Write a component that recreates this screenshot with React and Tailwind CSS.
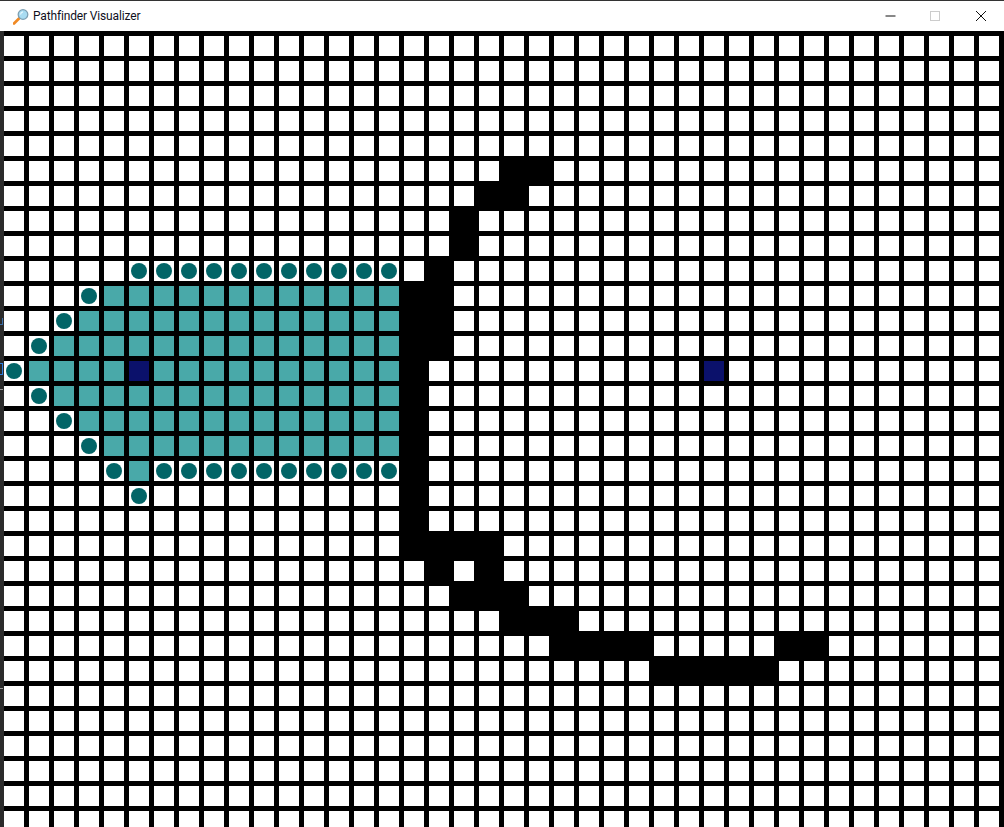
const COLS = 40;
const ROWS = 32;

const span = (row, from, to) => {
  const out = [];
  for (let c = from; c <= to; c++) out.push(`${row}:${c}`);
  return out;
};

const walls = new Set([
  ...span(5, 20, 21),
  ...span(6, 19, 20),
  ...span(7, 18, 18),
  ...span(8, 18, 18),
  ...span(9, 17, 17),
  ...span(10, 16, 17),
  ...span(11, 16, 17),
  ...span(12, 16, 17),
  ...span(13, 16, 16),
  ...span(14, 16, 16),
  ...span(15, 16, 16),
  ...span(16, 16, 16),
  ...span(17, 16, 16),
  ...span(18, 16, 16),
  ...span(19, 16, 16),
  ...span(20, 16, 19),
  ...span(21, 17, 17),
  ...span(21, 19, 19),
  ...span(22, 18, 20),
  ...span(23, 20, 22),
  ...span(24, 22, 25),
  ...span(24, 31, 32),
  ...span(25, 26, 30),
]);

const visited = new Set([
  ...span(10, 4, 15),
  ...span(11, 3, 15),
  ...span(12, 2, 15),
  ...span(13, 1, 15),
  ...span(14, 2, 15),
  ...span(15, 3, 15),
  ...span(16, 4, 15),
  ...span(17, 5, 5),
]);

const frontier = new Set([
  ...span(9, 5, 15),
  ...span(10, 3, 3),
  ...span(11, 2, 2),
  ...span(12, 1, 1),
  ...span(13, 0, 0),
  ...span(14, 1, 1),
  ...span(15, 2, 2),
  ...span(16, 3, 3),
  ...span(17, 4, 4),
  ...span(17, 6, 15),
  ...span(18, 5, 5),
]);

const endpoints = new Set(["13:5", "13:28"]);

const Cell = ({ id }) => {
  if (endpoints.has(id)) return <div className="h-5 w-5 bg-[#0b116b]" />;
  if (walls.has(id)) return <div className="relative h-5 w-5 bg-black before:absolute before:-inset-[5px] before:bg-black" />;
  if (visited.has(id)) return <div className="h-5 w-5 bg-[#49a9a9]" />;
  if (frontier.has(id))
    return (
      <div className="flex h-5 w-5 items-center justify-center bg-white">
        <div className="h-4 w-4 rounded-full bg-[#026567]" />
      </div>
    );
  return <div className="h-5 w-5 bg-white" />;
};

const TitleBar = () => (
  <div className="flex h-[31px] shrink-0 items-center border-t border-[#333] bg-white pl-[13px]">
    <svg width="16" height="17" viewBox="0 0 16 17" className="shrink-0">
      <path d="M1 15.5 L6 10.5" stroke="#f08a24" strokeWidth="2.6" strokeLinecap="round" />
      <circle cx="10" cy="6.5" r="4.8" fill="#a9dcf2" stroke="#7d9fb3" strokeWidth="1.3" />
      <path d="M7.5 6.5 A3 3 0 0 1 10 3.8" fill="none" stroke="#e6f7fd" strokeWidth="1.2" />
    </svg>
    <span className="ml-1 font-['Roboto','Noto_Sans',sans-serif] text-xs tracking-[-0.15px] text-[#10101c]">Pathfinder Visualizer</span>
    <div className="ml-auto flex items-center">
      <svg width="46" height="30" viewBox="0 0 46 30">
        <path d="M19.5 15 H29.5" stroke="#111" strokeWidth="1" />
      </svg>
      <svg width="46" height="30" viewBox="0 0 46 30">
        <rect x="18.5" y="10.5" width="9" height="9" fill="none" stroke="#ccc" strokeWidth="1" />
      </svg>
      <svg width="46" height="30" viewBox="0 0 46 30">
        <path d="M18 10 L28 20 M28 10 L18 20" stroke="#111" strokeWidth="1" />
      </svg>
    </div>
  </div>
);

// the 4px sliver of desktop showing down the left edge of the window
const DesktopEdge = () => (
  <div className="relative w-1 shrink-0 bg-[#2b2b2b]">
    <div className="absolute left-0 top-[287px] h-[7px] w-[3px] border-r border-b border-[#3b6ea8]" />
    <div className="absolute left-0 top-[332px] h-3 w-[3px] border-y border-r border-[#2f7fe0]" />
    <div className="absolute left-0 top-[358px] h-px w-[3px] bg-[#9a9a9a]" />
    <div className="absolute left-0 top-[657px] h-px w-[3px] bg-[#9a9a9a]" />
  </div>
);

export default function App() {
  const cells = [];
  for (let r = 0; r < ROWS; r++) {
    for (let c = 0; c < COLS; c++) {
      const id = `${r}:${c}`;
      cells.push(<Cell key={id} id={id} />);
    }
  }

  return (
    <div className="flex h-[827px] w-[1004px] flex-col overflow-hidden bg-white">
      <TitleBar />
      <div className="flex min-h-0 flex-1">
        <DesktopEdge />
        <div className="grid flex-1 grid-cols-[repeat(40,20px)] content-start gap-[5px] overflow-hidden bg-black pt-[5px]">
          {cells}
        </div>
      </div>
    </div>
  );
}
